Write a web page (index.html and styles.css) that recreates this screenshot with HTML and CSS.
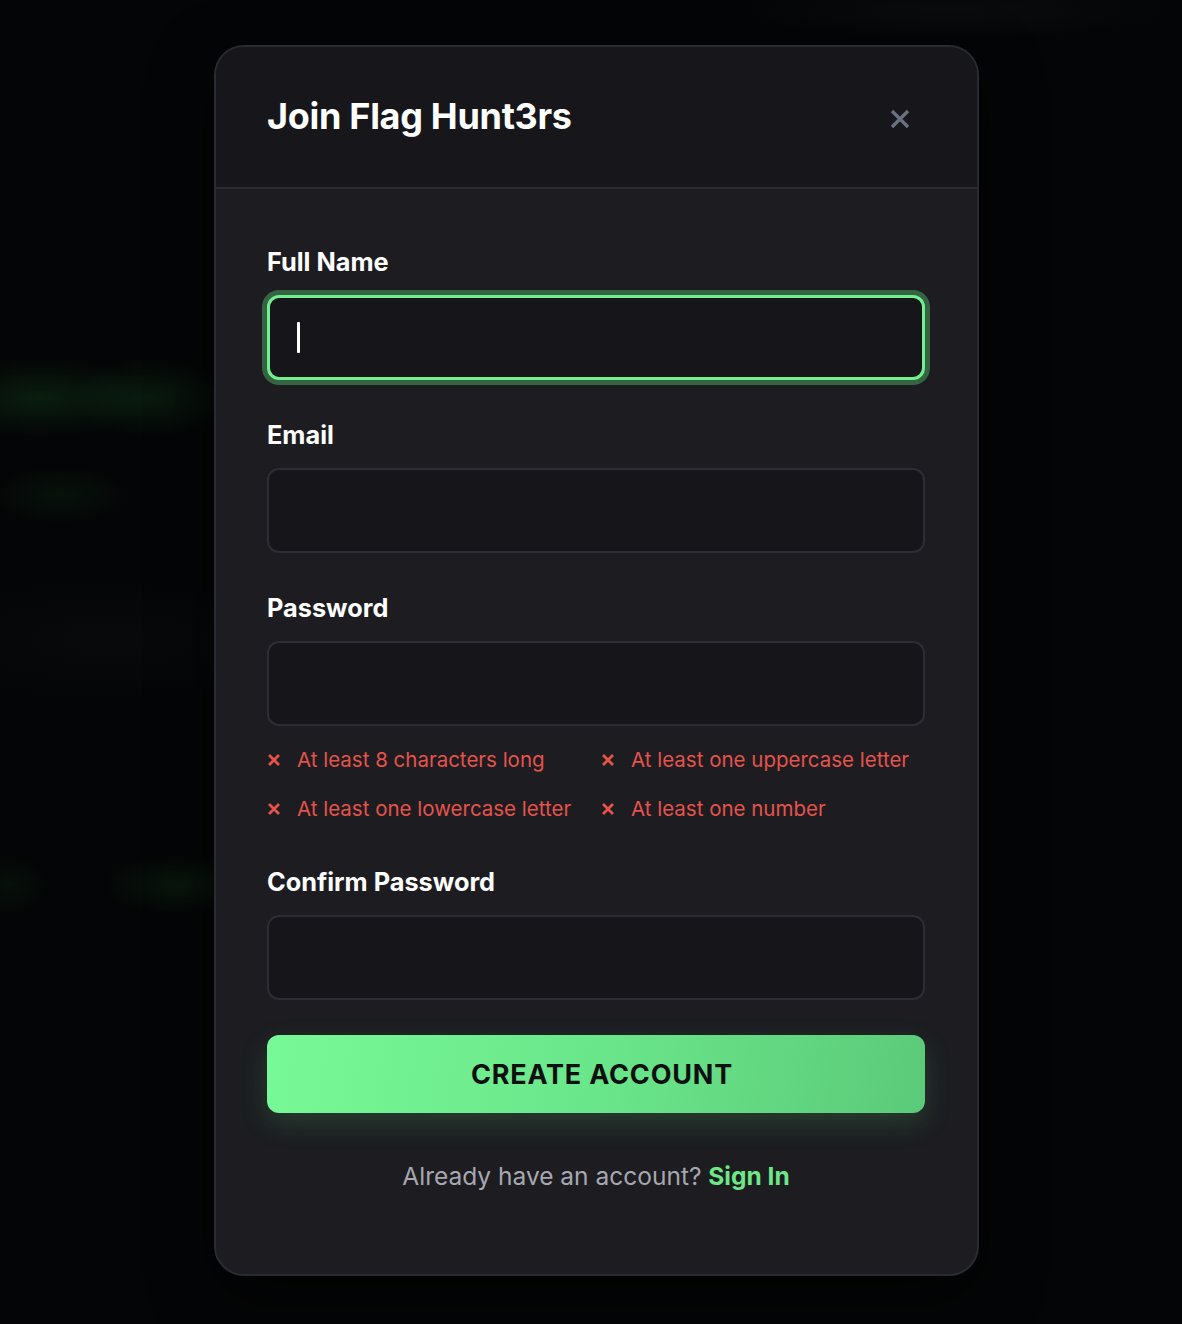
FILE: index.html
```html
<!DOCTYPE html>
<html lang="en">
<head>
<meta charset="utf-8">
<title>Join Flag Hunt3rs</title>
<link rel="stylesheet" href="styles.css">
</head>
<body>
<div class="backdrop"></div>
<div class="overlay">
  <div class="modal">
    <div class="modal-header">
      <h2 class="title">Join Flag Hunt3rs</h2>
      <button class="close" aria-label="Close">
        <svg width="20" height="20" viewBox="0 0 20 20"><path d="M2 2 L18 18 M18 2 L2 18" stroke="#6b7080" stroke-width="3.4" stroke-linecap="butt" fill="none"/></svg>
      </button>
    </div>
    <form class="modal-body">
      <div class="field">
        <label class="label">Full Name</label>
        <div class="input focused"><span class="caret"></span></div>
      </div>
      <div class="field">
        <label class="label">Email</label>
        <input class="input" type="email">
      </div>
      <div class="field field-pw">
        <label class="label">Password</label>
        <input class="input" type="password">
        <ul class="reqs">
          <li><svg class="x" width="14" height="12" viewBox="0 0 14 12"><path d="M2 1 L12 11 M12 1 L2 11" stroke="#e5534b" stroke-width="2.8" fill="none"/></svg>At least 8 characters long</li>
          <li><svg class="x" width="14" height="12" viewBox="0 0 14 12"><path d="M2 1 L12 11 M12 1 L2 11" stroke="#e5534b" stroke-width="2.8" fill="none"/></svg>At least one uppercase letter</li>
          <li><svg class="x" width="14" height="12" viewBox="0 0 14 12"><path d="M2 1 L12 11 M12 1 L2 11" stroke="#e5534b" stroke-width="2.8" fill="none"/></svg>At least one lowercase letter</li>
          <li><svg class="x" width="14" height="12" viewBox="0 0 14 12"><path d="M2 1 L12 11 M12 1 L2 11" stroke="#e5534b" stroke-width="2.8" fill="none"/></svg>At least one number</li>
        </ul>
      </div>
      <div class="field">
        <label class="label">Confirm Password</label>
        <input class="input" type="password">
      </div>
      <button type="button" class="submit">CREATE ACCOUNT</button>
      <p class="switch">Already have an account? <a class="link">Sign In</a></p>
    </form>
  </div>
</div>
</body>
</html>
```

FILE: styles.css
```css
* { box-sizing: border-box; }
html, body { margin: 0; padding: 0; }
body {
  background: #040506;
  font-family: Inter, "Noto Sans", sans-serif;
  width: 1182px;
  height: 1324px;
  overflow: hidden;
  position: relative;
}
.backdrop {
  position: absolute;
  inset: 0;
  background:
    radial-gradient(ellipse 110px 40px at 40px 398px, rgba(40,150,60,0.17), transparent),
    radial-gradient(ellipse 80px 40px at 150px 398px, rgba(40,150,60,0.15), transparent),
    radial-gradient(ellipse 70px 30px at 60px 495px, rgba(40,150,60,0.09), transparent),
    radial-gradient(ellipse 80px 30px at 180px 885px, rgba(40,150,60,0.12), transparent),
    radial-gradient(ellipse 40px 30px at 10px 885px, rgba(40,150,60,0.08), transparent),
    radial-gradient(ellipse 200px 60px at 110px 640px, rgba(80,90,80,0.06), transparent),
    radial-gradient(ellipse 220px 30px at 950px 10px, rgba(120,120,120,0.06), transparent),
    #040506;
}
.overlay {
  position: relative;
  display: flex;
  justify-content: center;
  padding: 45px 0 0 11px;
}
.modal {
  width: 765px;
  background: #1c1c21;
  border: 2px solid #2a2a32;
  border-radius: 30px;
  overflow: hidden;
  box-shadow: 0 20px 60px rgba(0,0,0,0.6);
}
.modal-header {
  background: #17171b;
  border-bottom: 2px solid #2a2a31;
  height: 142px;
  display: flex;
  align-items: center;
  justify-content: space-between;
  padding: 0 67px 0 51px;
}
.title {
  margin: 0;
  color: #ffffff;
  font-size: 36px;
  font-weight: 700;
  letter-spacing: -0.3px;
  position: relative;
  top: -1px;
}
.close {
  background: none;
  border: 0;
  padding: 0;
  width: 20px;
  height: 20px;
  display: flex;
  position: relative;
  top: 2px;
}
.modal-body {
  padding: 55px 52px 83px 51px;
  display: flex;
  flex-direction: column;
}
.field {
  display: flex;
  flex-direction: column;
  margin-bottom: 37px;
}
.label {
  color: #ffffff;
  font-size: 25.3px;
  font-weight: 700;
  line-height: 36px;
  margin-bottom: 15px;
}
.input {
  display: block;
  width: 100%;
  height: 85px;
  background: #16161a;
  border: 2px solid #2d2d35;
  border-radius: 12px;
  outline: none;
  font-family: inherit;
  font-size: 24px;
  color: #fff;
  padding: 0 28px;
}
.input.focused {
  border: 3px solid #72ef8e;
  box-shadow: 0 0 0 5px rgba(74, 160, 96, 0.55);
  display: flex;
  align-items: center;
  padding: 0 27px;
}
.caret {
  width: 3px;
  height: 31px;
  background: #ffffff;
  border-radius: 1px;
}
.field-pw { margin-bottom: 40px; }
.reqs {
  list-style: none;
  margin: 19px 0 0;
  padding: 0;
  display: grid;
  grid-template-columns: 324px 324px;
  column-gap: 10px;
  row-gap: 19px;
}
.reqs li {
  display: flex;
  align-items: center;
  color: #e5534b;
  font-size: 20.5px;
  line-height: 30px;
  white-space: nowrap;
}
.reqs .x {
  margin-right: 16px;
  flex: none;
}
.submit {
  margin-top: -2px;
  height: 78px;
  border: 0;
  border-radius: 12px;
  background: linear-gradient(100deg, #78f997 0%, #6ae68a 50%, #5cca79 100%);
  color: #0e0f10;
  font-family: inherit;
  font-size: 27px;
  font-weight: 700;
  letter-spacing: 0.8px;
  padding: 0 0 0 12px;
  box-shadow: 0 10px 28px rgba(100, 220, 130, 0.18);
}
.switch {
  margin: 48px 0 0;
  text-align: center;
  color: #a7a7b0;
  font-size: 24.5px;
  line-height: 30px;
}
.link {
  color: #6ee787;
  font-weight: 700;
}
```
